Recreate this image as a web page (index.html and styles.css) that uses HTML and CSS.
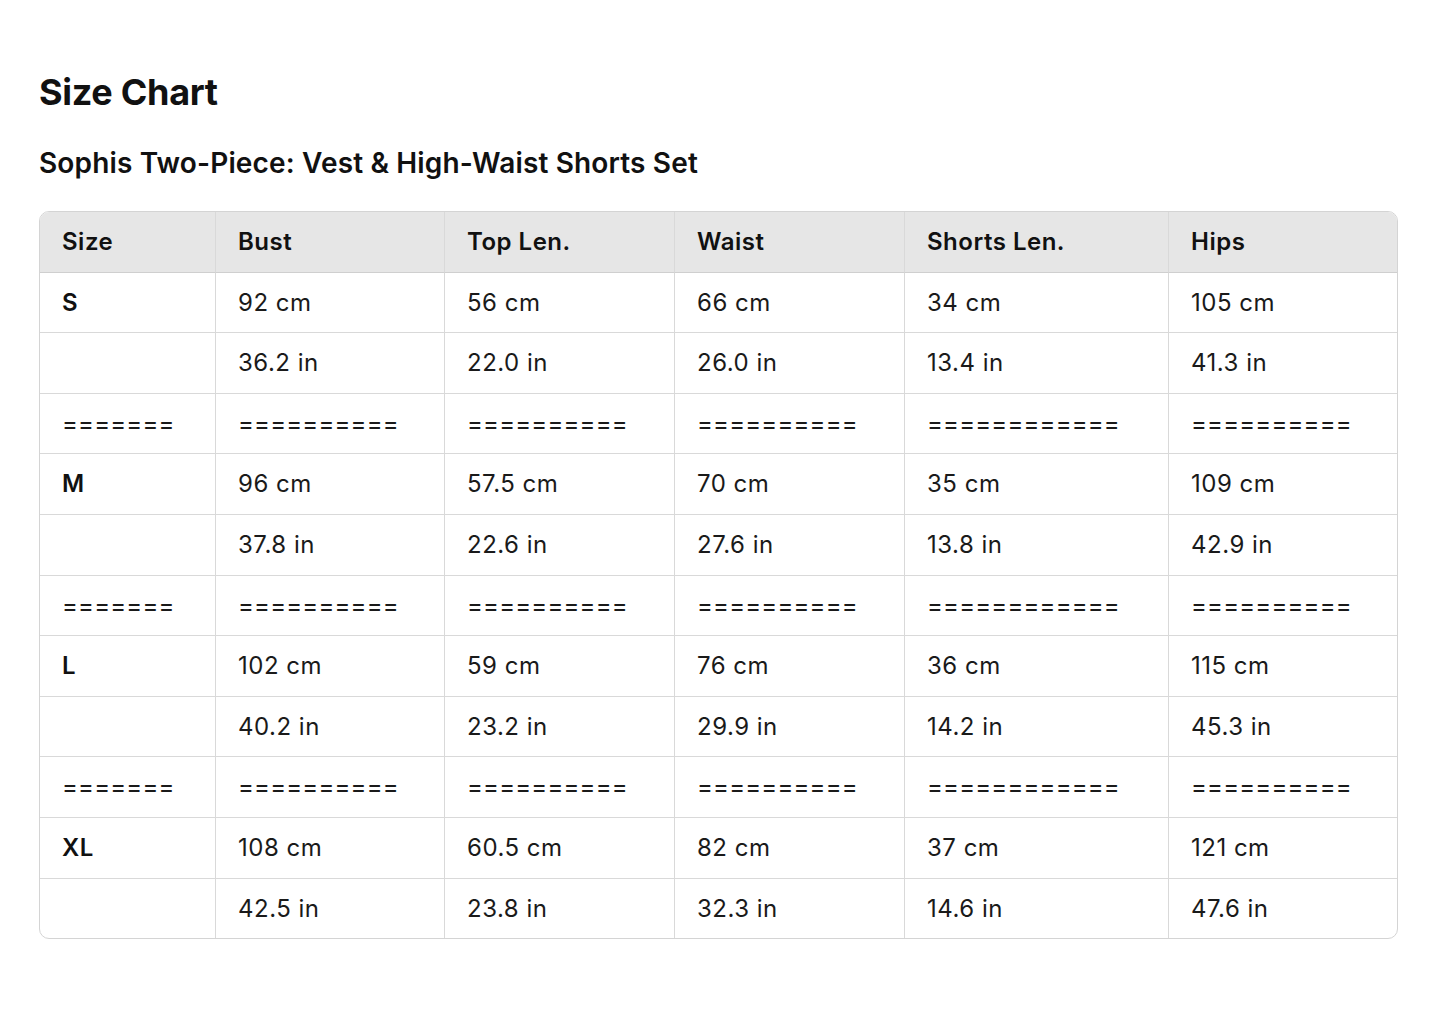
FILE: index.html
```html
<!DOCTYPE html>
<html lang="en">
<head>
<meta charset="utf-8">
<title>Size Chart</title>
<link rel="stylesheet" href="styles.css">
</head>
<body>
<main class="page">
  <h1 class="title">Size Chart</h1>
  <h2 class="subtitle">Sophis Two-Piece: Vest &amp; High-Waist Shorts Set</h2>
  <div class="table-wrap">
    <table class="chart">
      <colgroup>
        <col class="c1"><col class="c2"><col class="c3"><col class="c4"><col class="c5"><col class="c6">
      </colgroup>
      <thead>
        <tr><th>Size</th><th>Bust</th><th>Top Len.</th><th>Waist</th><th>Shorts Len.</th><th>Hips</th></tr>
      </thead>
      <tbody>
        <tr><td class="size">S</td><td>92 cm</td><td>56 cm</td><td>66 cm</td><td>34 cm</td><td>105 cm</td></tr>
        <tr><td></td><td>36.2 in</td><td>22.0 in</td><td>26.0 in</td><td>13.4 in</td><td>41.3 in</td></tr>
        <tr><td class="sep">=======</td><td class="sep">==========</td><td class="sep">==========</td><td class="sep">==========</td><td class="sep">============</td><td class="sep">==========</td></tr>
        <tr><td class="size">M</td><td>96 cm</td><td>57.5 cm</td><td>70 cm</td><td>35 cm</td><td>109 cm</td></tr>
        <tr><td></td><td>37.8 in</td><td>22.6 in</td><td>27.6 in</td><td>13.8 in</td><td>42.9 in</td></tr>
        <tr><td class="sep">=======</td><td class="sep">==========</td><td class="sep">==========</td><td class="sep">==========</td><td class="sep">============</td><td class="sep">==========</td></tr>
        <tr><td class="size">L</td><td>102 cm</td><td>59 cm</td><td>76 cm</td><td>36 cm</td><td>115 cm</td></tr>
        <tr><td></td><td>40.2 in</td><td>23.2 in</td><td>29.9 in</td><td>14.2 in</td><td>45.3 in</td></tr>
        <tr><td class="sep">=======</td><td class="sep">==========</td><td class="sep">==========</td><td class="sep">==========</td><td class="sep">============</td><td class="sep">==========</td></tr>
        <tr><td class="size">XL</td><td>108 cm</td><td>60.5 cm</td><td>82 cm</td><td>37 cm</td><td>121 cm</td></tr>
        <tr><td></td><td>42.5 in</td><td>23.8 in</td><td>32.3 in</td><td>14.6 in</td><td>47.6 in</td></tr>
      </tbody>
    </table>
  </div>
</main>
</body>
</html>
```
FILE: styles.css
```css
html, body {
  margin: 0;
  padding: 0;
  background: #ffffff;
}
body {
  font-family: Inter, "Noto Sans", "Liberation Sans", sans-serif;
  color: #111111;
}
.page {
  padding: 68px 47px 40px 39px;
}
.title {
  margin: 0;
  font-size: 36px;
  line-height: 48px;
  font-weight: 700;
  letter-spacing: -0.3px;
}
.subtitle {
  margin: 30px 0 0 0;
  font-size: 28px;
  line-height: 34px;
  font-weight: 600;
  letter-spacing: 0.15px;
}
.table-wrap {
  margin-top: 31px;
  width: 1357px;
  border: 1px solid #d4d4d4;
  border-radius: 10px;
  overflow: hidden;
}
.chart {
  width: 100%;
  border-collapse: separate;
  border-spacing: 0;
  table-layout: fixed;
  font-size: 24px;
  letter-spacing: 0.5px;
}
.c1 { width: 176px; }
.c2 { width: 229px; }
.c3 { width: 230px; }
.c4 { width: 230px; }
.c5 { width: 264px; }
.c6 { width: 228px; }
.chart th,
.chart td {
  text-align: left;
  padding: 16px 22px 16px 22px;
  line-height: 27.6px;
  border-right: 1px solid #d9d9d9;
  border-bottom: 1px solid #d9d9d9;
  white-space: nowrap;
  overflow: hidden;
}
.chart th:last-child,
.chart td:last-child {
  border-right: none;
}
.chart tbody tr:last-child td {
  border-bottom: none;
}
.chart th {
  background: #e6e6e6;
  font-weight: 600;
  border-bottom: 1px solid #cfcfcf;
}
.chart td {
  font-weight: 400;
  color: #1a1a1a;
}
.chart td.sep {
  letter-spacing: 0.2px;
}
.chart td.size {
  font-weight: 600;
  color: #111111;
}
```
